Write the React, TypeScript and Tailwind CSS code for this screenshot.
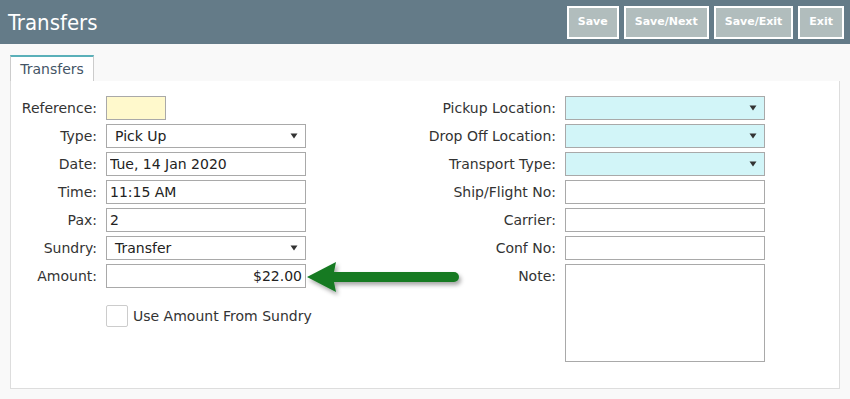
import React from 'react'

const font = "font-['DejaVu_Sans',Verdana,sans-serif]"

const Caret = () => (
  <svg width="8" height="6" viewBox="0 0 8 6" className="shrink-0">
    <polygon points="0.5,0.5 7.5,0.5 4,5.5" fill="#333" />
  </svg>
)

const Row = ({ label, labelW, children, top }: { label: string; labelW: string; children: React.ReactNode; top?: boolean }) => (
  <div className={`flex gap-[9px] ${top ? 'items-start' : 'items-center'}`}>
    <label className={`${labelW} shrink-0 text-right text-[14px] text-[#333] ${top ? 'pt-[2px]' : ''}`}>{label}</label>
    {children}
  </div>
)

const TextBox = ({ value = '', right, className = 'w-[200px] bg-white' }: { value?: string; right?: boolean; className?: string }) => (
  <input
    readOnly
    defaultValue={value}
    className={`h-6 border border-[#a9a9a9] px-[3px] text-[14px] text-[#222] outline-none ${right ? 'text-right' : ''} ${className}`}
  />
)

const Select = ({ value = '', bg = 'bg-white' }: { value?: string; bg?: string }) => (
  <div className={`flex h-6 w-[200px] items-center justify-between border border-[#a9a9a9] pl-[8px] pr-[7px] text-[14px] text-[#222] ${bg}`}>
    <span>{value}</span>
    <Caret />
  </div>
)

const Btn = ({ children }: { children: React.ReactNode }) => (
  <button className="h-[33px] border-2 border-white bg-[#b1bdbd] px-[9px] text-[11px] font-bold text-white">{children}</button>
)

export default function App() {
  return (
    <div className={`${font} min-h-[399px] w-[850px] bg-[#f9f9f9]`}>
      <header className="flex h-[44px] items-center justify-between bg-[#647b88] pl-[8px] pr-[6px]">
        <h1 className="font-stretch-condensed text-[22px] text-white">Transfers</h1>
        <div className="flex gap-[5px]">
          <Btn>Save</Btn>
          <Btn>Save/Next</Btn>
          <Btn>Save/Exit</Btn>
          <Btn>Exit</Btn>
        </div>
      </header>

      <div className="px-[10px] pt-[11px]">
        <div className="flex">
          <div className="flex h-[27px] w-[84px] items-center justify-center border-x border-t-2 border-[#ccc] border-t-[#5ab0b9] bg-white text-[14px] text-[#445566]">
            Transfers
          </div>
          <div className="flex-1 border-b border-[#ddd]" />
        </div>

        <div className="relative -mt-px flex border border-t-0 border-[#ddd] bg-white pb-[26px] pt-[15px]">
          <div className="flex w-[405px] flex-col gap-1">
            <Row label="Reference:" labelW="w-[86px]">
              <TextBox className="w-[60px] bg-[#fff9cc]" />
            </Row>
            <Row label="Type:" labelW="w-[86px]">
              <Select value="Pick Up" />
            </Row>
            <Row label="Date:" labelW="w-[86px]">
              <TextBox value="Tue, 14 Jan 2020" />
            </Row>
            <Row label="Time:" labelW="w-[86px]">
              <TextBox value="11:15 AM" />
            </Row>
            <Row label="Pax:" labelW="w-[86px]">
              <TextBox value="2" />
            </Row>
            <Row label="Sundry:" labelW="w-[86px]">
              <Select value="Transfer" />
            </Row>
            <Row label="Amount:" labelW="w-[86px]">
              <TextBox value="$22.00" right />
            </Row>
            <div className="ml-[95px] mt-[13px] flex items-center gap-[5px]">
              <span className="h-[22px] w-[22px] rounded-[2px] border border-[#ccc] bg-white" />
              <span className="text-[14px] text-[#333]">Use Amount From Sundry</span>
            </div>
          </div>

          <div className="flex flex-col gap-1">
            <Row label="Pickup Location:" labelW="w-[140px]">
              <Select bg="bg-[#d2f5f8]" />
            </Row>
            <Row label="Drop Off Location:" labelW="w-[140px]">
              <Select bg="bg-[#d2f5f8]" />
            </Row>
            <Row label="Transport Type:" labelW="w-[140px]">
              <Select bg="bg-[#d2f5f8]" />
            </Row>
            <Row label="Ship/Flight No:" labelW="w-[140px]">
              <TextBox />
            </Row>
            <Row label="Carrier:" labelW="w-[140px]">
              <TextBox />
            </Row>
            <Row label="Conf No:" labelW="w-[140px]">
              <TextBox />
            </Row>
            <Row label="Note:" labelW="w-[140px]" top>
              <textarea readOnly className="h-[98px] w-[200px] resize-none border border-[#a9a9a9] bg-white outline-none" />
            </Row>
          </div>

          <svg className="absolute left-[278px] top-[174px]" width="180" height="50" viewBox="0 0 180 50">
            <defs>
              <filter id="sh" x="-10%" y="-30%" width="130%" height="180%">
                <feDropShadow dx="2" dy="3" stdDeviation="2" floodColor="#000" floodOpacity="0.35" />
              </filter>
            </defs>
            <g filter="url(#sh)" fill="#157a22">
              <line x1="44" y1="22" x2="165" y2="22" stroke="#157a22" strokeWidth="10" strokeLinecap="round" />
              <polygon points="18,22 47,7 44,22 47,37" />
            </g>
          </svg>
        </div>
      </div>
    </div>
  )
}
